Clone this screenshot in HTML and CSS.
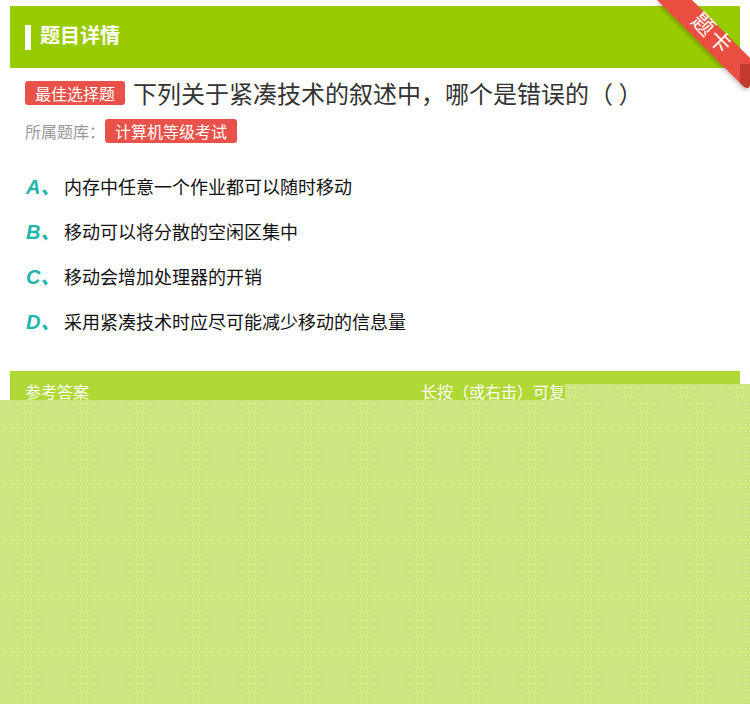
FILE: index.html
```html
<!DOCTYPE html>
<html lang="zh-CN">
<head>
<meta charset="utf-8">
<title>题目详情</title>
<link rel="stylesheet" href="styles.css">
</head>
<body>
<div class="page">
  <div class="header">
    <span class="header-bar"></span>
    <span class="header-title">题目详情</span>
  </div>
  <div class="question">
    <div class="q-row">
      <span class="tag">最佳选择题</span>
      <span class="q-text">下列关于紧凑技术的叙述中，哪个是错误的（ ）</span>
    </div>
    <div class="bank-row">
      <span class="bank-label">所属题库：</span>
      <span class="tag">计算机等级考试</span>
    </div>
    <ul class="options">
      <li class="option"><span class="opt-letter">A、</span><span class="opt-text">内存中任意一个作业都可以随时移动</span></li>
      <li class="option"><span class="opt-letter">B、</span><span class="opt-text">移动可以将分散的空闲区集中</span></li>
      <li class="option"><span class="opt-letter">C、</span><span class="opt-text">移动会增加处理器的开销</span></li>
      <li class="option"><span class="opt-letter">D、</span><span class="opt-text">采用紧凑技术时应尽可能减少移动的信息量</span></li>
    </ul>
  </div>
  <div class="answer-bar">
    <span class="answer-title">参考答案</span>
    <span class="answer-tip">长按（或右击）可复制答案内容，方便保存</span>
  </div>
</div>

<svg class="ribbon" width="95" height="92" viewBox="0 0 95 92">
  <defs>
    <filter id="sh" x="-20%" y="-20%" width="140%" height="140%">
      <feDropShadow dx="-1" dy="2" stdDeviation="2" flood-color="#000" flood-opacity="0.25"/>
    </filter>
  </defs>
  <g filter="url(#sh)">
    <path d="M85,60 L95,60 L95,84 Q95,90 89,87 L85,83 Z" fill="#c23a2e"/>
    <polygon points="2,0 37,0 95,58 95,64 85,64 85,83" fill="#e8503f"/>
  </g>
  <text class="ribbon-text" transform="translate(59,32) rotate(45)" text-anchor="middle" dominant-baseline="central">题卡</text>
</svg>

<div class="overlay overlay-main"></div>
<div class="overlay overlay-notch"></div>
</body>
</html>
```

FILE: styles.css
```css
html, body {
  margin: 0;
  padding: 0;
  background: #ffffff;
}

body {
  font-family: "Noto Sans CJK SC", "Noto Sans", sans-serif;
  color: #333333;
  position: relative;
  width: 750px;
  height: 704px;
  overflow: hidden;
}

.page {
  padding: 6px 10px 0;
}

.header {
  height: 62px;
  background: #99cc00;
  display: flex;
  align-items: center;
  padding-left: 15px;
}

.header-bar {
  width: 6px;
  height: 25px;
  background: #ffffff;
  margin-right: 9px;
}

.header-title {
  color: #ffffff;
  font-size: 20px;
  font-weight: bold;
  line-height: 1;
  padding-bottom: 5px;
}

.question {
  padding: 9px 15px 0;
}

.q-row {
  display: flex;
  align-items: center;
  height: 32px;
}

.tag {
  display: inline-block;
  background: #e8524a;
  color: #ffffff;
  font-size: 16px;
  line-height: 24px;
  height: 24px;
  padding: 0 10px;
  border-radius: 3px;
}

.q-text {
  margin-left: 8px;
  font-size: 24px;
  line-height: 32px;
  color: #333333;
}

.bank-row {
  display: flex;
  align-items: center;
  height: 24px;
  margin-top: 10px;
}

.bank-label {
  font-size: 16px;
  color: #999999;
}

.options {
  list-style: none;
  margin: 20px 0 0;
  padding: 0;
}

.option {
  display: flex;
  align-items: center;
  height: 45px;
}

.opt-letter {
  font-family: "Liberation Sans", Arial, "Noto Sans CJK SC", sans-serif;
  font-style: italic;
  font-weight: bold;
  font-size: 20px;
  color: #22b5ad;
  width: 38px;
  padding-left: 1px;
}

.opt-text {
  font-size: 18px;
  color: #111111;
}

.answer-bar {
  margin-top: 28px;
  height: 44px;
  background: #b0d836;
  display: flex;
  align-items: flex-start;
  justify-content: space-between;
  padding: 9px 15px 0;
  box-sizing: border-box;
}

.answer-title,
.answer-tip {
  color: #ffffff;
  font-size: 16px;
  line-height: 22px;
}

.ribbon {
  position: absolute;
  top: 0;
  right: 0;
}

.ribbon-text {
  fill: #ffffff;
  font-family: "Noto Sans CJK SC", sans-serif;
  font-size: 22px;
  letter-spacing: 2px;
}

.overlay {
  position: absolute;
  background-color: #cde67f;
  background-image: radial-gradient(circle, rgba(255, 255, 255, 0.55) 0.8px, transparent 1px);
  background-size: 7px 7px;
}

.overlay-main {
  left: 0;
  right: 0;
  top: 400px;
  bottom: 0;
}

.overlay-notch {
  left: 565px;
  right: 0;
  top: 384px;
  height: 16px;
}
```
